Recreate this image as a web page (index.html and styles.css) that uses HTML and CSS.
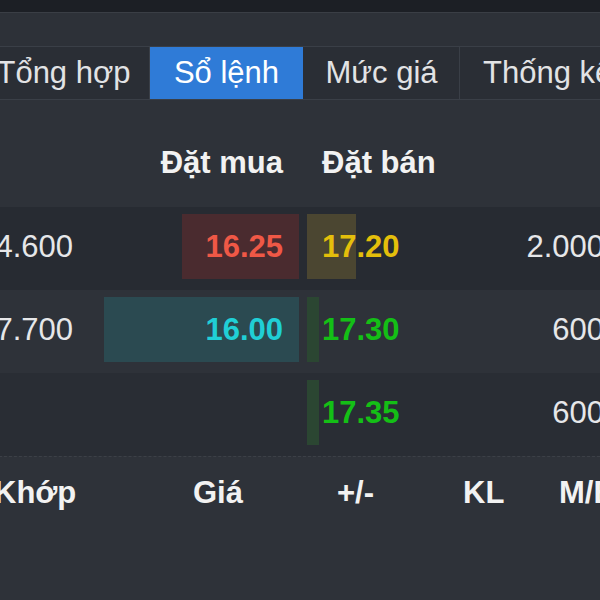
FILE: index.html
```html
<!DOCTYPE html>
<html lang="vi">
<head>
  <meta charset="UTF-8">
  <title>Sổ lệnh</title>
  <link rel="stylesheet" href="styles.css">
</head>
<body>
  <div class="topbar"></div>
  <div class="strip"></div>

  <nav class="tabs">
    <div class="tab tab-sum">Tổng hợp</div>
    <div class="tab tab-book active">Sổ lệnh</div>
    <div class="tab tab-level">Mức giá</div>
    <div class="tab tab-stats">Thống kê</div>
  </nav>

  <div class="book">
    <div class="book-row head">
      <div class="cell vol"></div>
      <div class="cell bid">Đặt mua</div>
      <div class="cell ask">Đặt bán</div>
      <div class="cell vol"></div>
    </div>

    <div class="book-row r1">
      <div class="cell vol">4.600</div>
      <div class="cell bid down" style="--w: 117px">16.25</div>
      <div class="cell ask ref" style="--w: 49px">17.20</div>
      <div class="cell vol">2.000</div>
    </div>

    <div class="book-row r2">
      <div class="cell vol">7.700</div>
      <div class="cell bid floor" style="--w: 195px">16.00</div>
      <div class="cell ask up" style="--w: 12px">17.30</div>
      <div class="cell vol">600</div>
    </div>

    <div class="book-row r3">
      <div class="cell vol"></div>
      <div class="cell bid"></div>
      <div class="cell ask up" style="--w: 12px">17.35</div>
      <div class="cell vol">600</div>
    </div>
  </div>

  <div class="match-head">
    <span>Khớp</span>
    <span>Giá</span>
    <span>+/-</span>
    <span>KL</span>
    <span>M/B</span>
  </div>
</body>
</html>
```

FILE: styles.css
```css
body {
  margin: 0;
  width: 600px;
  height: 600px;
  overflow: hidden;
  background-color: #2e3239;
  font-family: "Liberation Sans", Arial, sans-serif;
  font-size: 31px;
  color: #e6e7e9;
}

.topbar {
  height: 12px;
  background-color: #1c1f25;
  border-bottom: 1px solid #3a3e45;
}

.strip {
  height: 33px;
  background-color: #2d3138;
}

/* tabs */

.tabs {
  display: flex;
  margin-left: -22px;
  width: 700px;
  height: 52px;
  background-color: #2a2e35;
  border-top: 1px solid #3a3f47;
  border-bottom: 1px solid #3a3f47;
}

.tab {
  flex: none;
  display: flex;
  align-items: center;
  justify-content: center;
  white-space: nowrap;
  border-right: 1px solid #3a3f47;
  color: #e2e3e5;
}

.tab-sum { width: 171px; }
.tab-book { width: 153px; }
.tab-level { width: 155px; }
.tab-stats { width: 190px; justify-content: flex-start; padding-left: 23px; }

.tab.active {
  background-color: #2f7bd7;
  color: #ffffff;
  border-right-color: #2a2e35;
}

/* order book */

.book {
  margin-left: -40px;
  width: 700px;
}

.book-row {
  display: grid;
  grid-template-columns: 120px 211px 153px 144px;
  column-gap: 8px;
  height: 83px;
  align-items: start;
}

.book-row.head {
  height: 107px;
  background-color: #2e3239;
  font-weight: bold;
  color: #f2f2f2;
}

.book-row.head .cell {
  margin-top: 30px;
}

.r1 { background-color: #272b32; }
.r2 { background-color: #2e3239; }
.r3 { background-color: #292d34; }

.cell {
  height: 65px;
  margin-top: 7px;
  display: flex;
  align-items: center;
  white-space: nowrap;
}

.vol {
  justify-content: flex-end;
  padding-right: 7px;
}

.vol:last-child {
  padding-right: 8px;
}

.bid {
  justify-content: flex-end;
  padding-right: 16px;
  font-weight: bold;
  background: linear-gradient(var(--bar), var(--bar)) right / var(--w, 0) 100% no-repeat;
}

.ask {
  padding-left: 15px;
  font-weight: bold;
  background: linear-gradient(var(--bar), var(--bar)) left / var(--w, 0) 100% no-repeat;
}

.head .bid,
.head .ask {
  background: none;
}

.down  { color: #ef5846; --bar: #4a2b2f; }
.ref   { color: #e4bf0b; --bar: #4b4631; }
.floor { color: #20cfd6; --bar: #2b4a51; }
.up    { color: #14bf16; --bar: #2b4632; }

/* matched list */

.match-head {
  border-top: 1px dashed #3c4047;
  display: grid;
  grid-template-columns: 199px 144px 126px 96px auto;
  margin-left: -6px;
  padding-top: 19px;
  line-height: 34px;
  font-weight: bold;
  color: #f2f2f2;
  white-space: nowrap;
}
```
